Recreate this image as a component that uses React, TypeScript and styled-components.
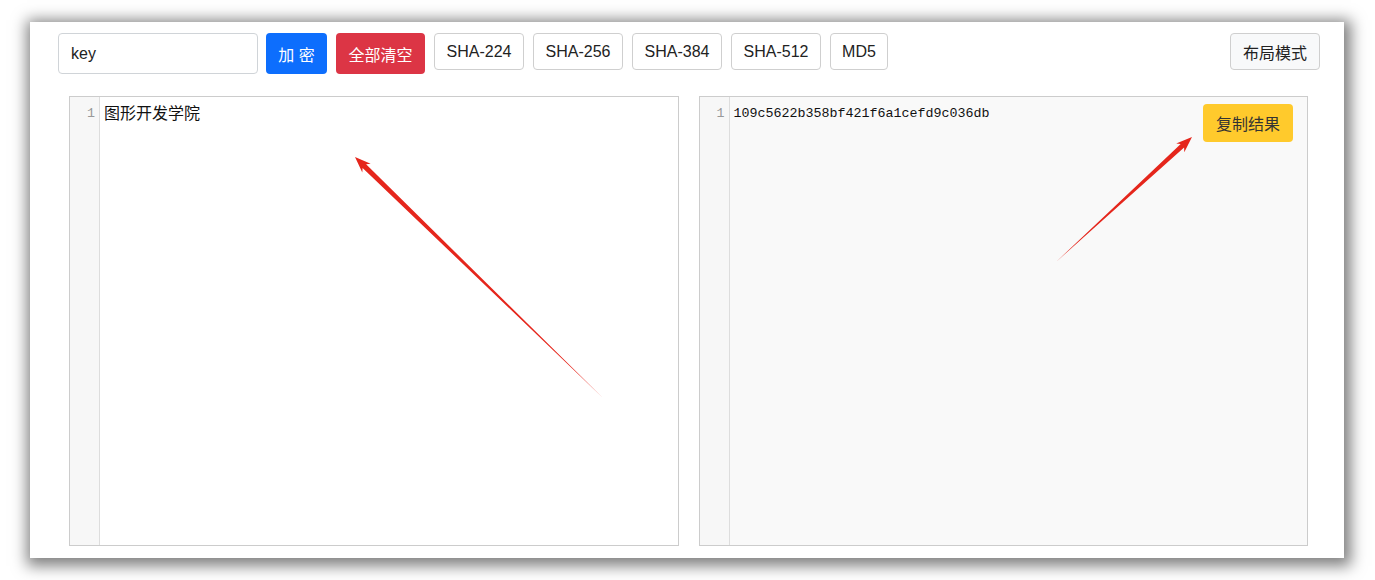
import styled, { createGlobalStyle } from 'styled-components'


const GlobalStyle = createGlobalStyle`
  html, body {
    margin: 0;
    padding: 0;
    background: #FFF;
  }
  * {
    box-sizing: border-box;
  }
`

const Page = styled.div`
  width: 1375px;
  height: 580px;
  position: relative;
  overflow: hidden;
  background: #FFF;
  padding: 22px 31px 22px 30px;
  font-family: "Liberation Sans", "Noto Sans CJK SC", sans-serif;
`

const Window = styled.div`
  width: 100%;
  height: 536px;
  background: #FFF;
  box-shadow: 2px 3px 14px 5px rgba(0, 0, 0, 0.5);

  display: flex;
  flex-direction: column;
  padding: 11px 24px 12px 28px;
`

const Toolbar = styled.div`
  display: flex;
  flex-direction: row;
  align-items: flex-start;
  gap: 9px;
`

const KeyInput = styled.input`
  width: 200px;
  height: 41px;
  border: 1px solid #D0D4D8;
  border-radius: 4px;
  padding: 0 12px;
  margin-right: -1px;
  font-family: "Liberation Sans", "Noto Sans CJK SC", sans-serif;
  font-size: 16px;
  color: #222;
  outline: none;
`

const ActionButton = styled.button<{ $tone: 'primary' | 'danger'; $w: number }>`
  width: ${p => p.$w}px;
  height: 41px;
  border: none;
  border-radius: 4px;
  padding: 0;
  font-family: "Liberation Sans", "Noto Sans CJK SC", sans-serif;
  font-size: 16px;
  color: #FFF;
  background: ${p => p.$tone === 'primary' ? '#0D6EFD' : '#DC3545'};
`

const HashButton = styled.button<{ $w: number; $light?: boolean }>`
  width: ${p => p.$w}px;
  height: 37px;
  border: 1px solid #CFCFCF;
  border-radius: 4px;
  padding: 0;
  font-family: "Liberation Sans", "Noto Sans CJK SC", sans-serif;
  font-size: 16px;
  color: #222;
  background: ${p => p.$light ? '#F8F9FA' : '#FFF'};
`

const Spacer = styled.div`
  flex: 1;
`

const Editors = styled.div`
  flex: 1;
  display: flex;
  flex-direction: row;
  gap: 20px;
  margin-top: 22px;
  padding: 0 12px 0 11px;
`

const Editor = styled.div<{ $readonly?: boolean }>`
  flex: 1;
  position: relative;
  display: flex;
  flex-direction: row;
  border: 1px solid #CCC;
  background: ${p => p.$readonly ? '#F9F9F9' : '#FFF'};
`

const Gutter = styled.div`
  width: 30px;
  background: #F7F7F7;
  border-right: 1px solid #DDD;
  padding: 8px 4px 0 0;
  text-align: right;
  font-family: "Liberation Mono", monospace;
  font-size: 13.33px;
  line-height: 18px;
  color: #999;
`

const Code = styled.div<{ $mono?: boolean }>`
  flex: 1;
  padding: ${p => p.$mono ? '8px' : '6px'} 4px 0 4px;
  line-height: 18px;
  color: #111;
  font-family: ${p => p.$mono
    ? '"Liberation Mono", monospace'
    : '"Noto Sans CJK SC", sans-serif'};
  font-size: ${p => p.$mono ? '13.33px' : '16px'};
`

const CopyButton = styled.button`
  position: absolute;
  top: 7px;
  right: 14px;
  width: 90px;
  height: 38px;
  border: none;
  border-radius: 4px;
  background: #FFCA2C;
  font-family: "Liberation Sans", "Noto Sans CJK SC", sans-serif;
  font-size: 16px;
  color: #333;
`

const Overlay = styled.svg`
  position: absolute;
  top: 0;
  left: 0;
  pointer-events: none;
`


type TPoint = [number, number]

// tapered annotation arrow: thin at the tail, barbed head at the tip
function arrowPath(tail: TPoint, tip: TPoint, shaft: number, headLen: number, headW: number) {
  const dx = tip[0] - tail[0]
  const dy = tip[1] - tail[1]
  const len = Math.hypot(dx, dy)
  const ux = dx / len, uy = dy / len
  const nx = -uy, ny = ux
  const bx = tip[0] - ux * headLen
  const by = tip[1] - uy * headLen
  const barbX = bx - ux * 3
  const barbY = by - uy * 3
  const pts: TPoint[] = [
    tail,
    [bx + nx * shaft / 2, by + ny * shaft / 2],
    [barbX + nx * headW / 2, barbY + ny * headW / 2],
    tip,
    [barbX - nx * headW / 2, barbY - ny * headW / 2],
    [bx - nx * shaft / 2, by - ny * shaft / 2],
  ]
  return pts.map(p => `${p[0].toFixed(1)},${p[1].toFixed(1)}`).join(' ')
}


const HASHES = [
  { label: 'SHA-224', w: 90 },
  { label: 'SHA-256', w: 90 },
  { label: 'SHA-384', w: 90 },
  { label: 'SHA-512', w: 90 },
  { label: 'MD5', w: 58 },
]

export default function App() {
  return (
    <Page>
      <GlobalStyle />
      <Window>

        <Toolbar>
          <KeyInput defaultValue="key" />
          <ActionButton $tone="primary" $w={61}>加 密</ActionButton>
          <ActionButton $tone="danger" $w={89}>全部清空</ActionButton>
          {
            HASHES.map(h =>
              <HashButton key={h.label} $w={h.w}>{h.label}</HashButton>
            )
          }
          <Spacer />
          <HashButton $w={90} $light>布局模式</HashButton>
        </Toolbar>

        <Editors>
          <Editor>
            <Gutter>1</Gutter>
            <Code>图形开发学院</Code>
          </Editor>
          <Editor $readonly>
            <Gutter>1</Gutter>
            <Code $mono>109c5622b358bf421f6a1cefd9c036db</Code>
            <CopyButton>复制结果</CopyButton>
          </Editor>
        </Editors>

      </Window>

      <Overlay width={1375} height={580} viewBox="0 0 1375 580">
        <polygon points={arrowPath([603, 398], [355, 157], 5, 13, 12)} fill="#E5261C" />
        <polygon points={arrowPath([1056, 262], [1192, 137], 5, 13, 12)} fill="#E5261C" />
      </Overlay>
    </Page>
  )
}
